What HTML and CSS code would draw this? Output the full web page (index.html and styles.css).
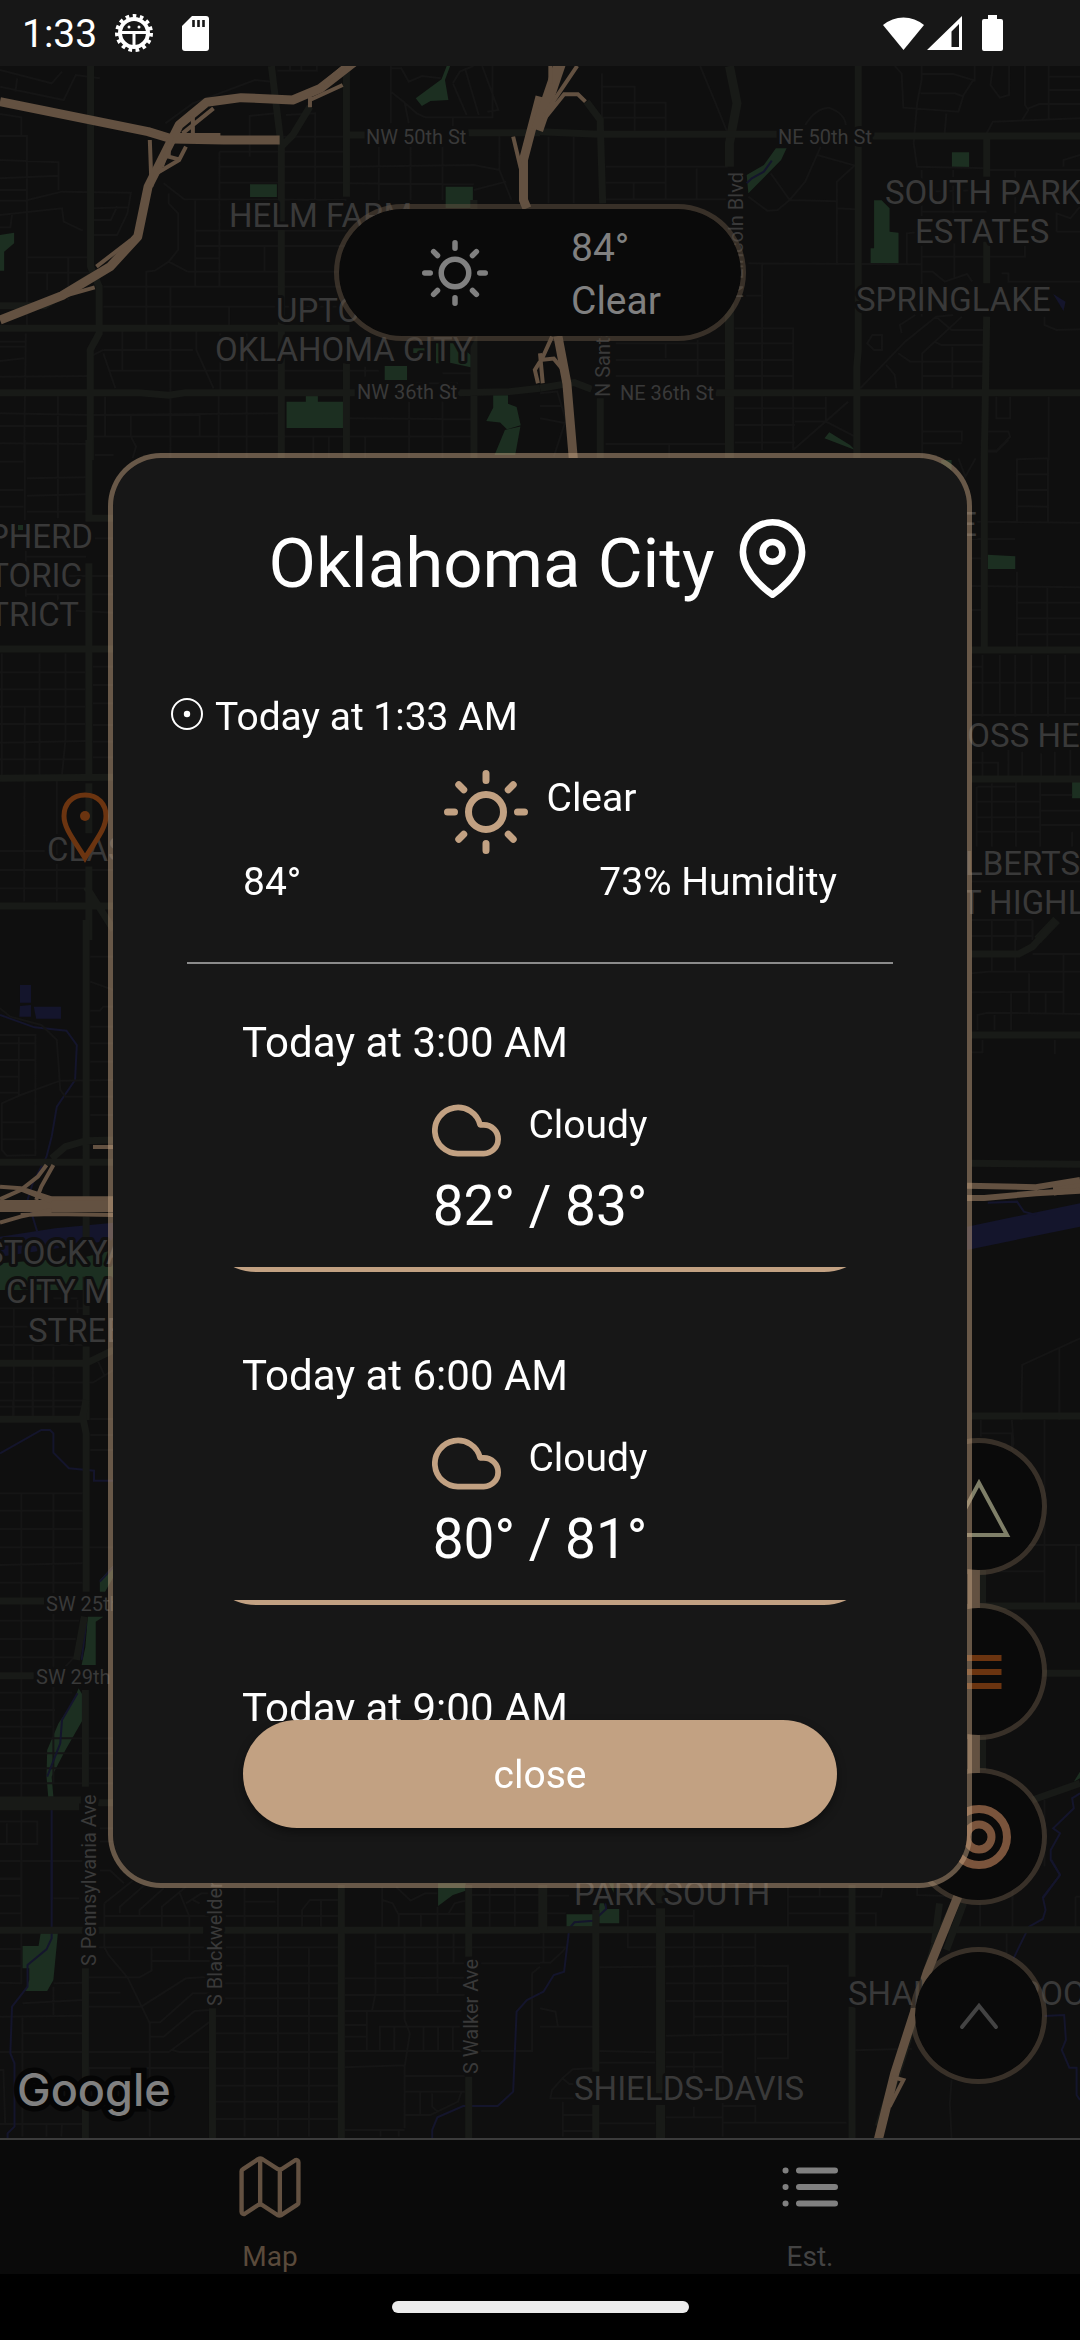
FILE: index.html
```html
<!DOCTYPE html>
<html lang="en">
<head>
<meta charset="utf-8">
<meta name="viewport" content="width=device-width, initial-scale=1">
<title>Oklahoma City weather</title>
<link rel="stylesheet" href="styles.css">
</head>
<body>
<header class="status">
  <div class="status-group">
    <span class="clock">1:33</span>
    <svg class="status-gear" viewBox="0 0 40 40" aria-hidden="true">
      <circle cx="20" cy="20" r="17" fill="none" stroke="#fff" stroke-width="4" stroke-dasharray="3.6 3.52"/>
      <circle cx="20" cy="20" r="14" fill="none" stroke="#fff" stroke-width="4"/>
      <path d="M7 19.500H33M20 20V33" stroke="#fff" stroke-width="3"/>
      <circle cx="15" cy="14" r="1.500" fill="#fff"/><circle cx="25" cy="14" r="1.500" fill="#fff"/>
    </svg>
    <svg class="status-card" viewBox="0 0 27 35" aria-hidden="true">
      <path d="M10 0H24a3 3 0 0 1 3 3V32a3 3 0 0 1-3 3H3a3 3 0 0 1-3-3V10z" fill="#fff"/>
      <path d="M11.500 4v7M16.500 4v7M21.500 4v7" stroke="#171717" stroke-width="2.600"/>
    </svg>
  </div>
  <div class="status-group status-right">
    <svg class="status-wifi" viewBox="0 0 41 34" aria-hidden="true"><path d="M0 9A32 32 0 0 1 41 9L20.500 34z" fill="#fff"/></svg>
    <svg class="status-signal" viewBox="0 0 35 34" aria-hidden="true"><path fill-rule="evenodd" d="M35 0V34H0zM32 8L24.500 15.500V31H32z" fill="#fff"/></svg>
    <svg class="status-battery" viewBox="0 0 21 36" aria-hidden="true"><path d="M6 0h9v4h4a2 2 0 0 1 2 2v28a2 2 0 0 1-2 2H2a2 2 0 0 1-2-2V6a2 2 0 0 1 2-2h4z" fill="#fff"/></svg>
  </div>
</header>

<main class="map">
  <svg class="map-art" viewBox="0 66 1080 2072" preserveAspectRatio="xMidYMid slice" aria-hidden="true">
    <!-- north-west -->
    <g transform="scale(.3444 .3333)">
      <path class="park" d="M726 553h78v38h-78zM1294 560h79v64h-79zM1297 198L1282 238 1207 295 1225 318 1250 303 1302 300 1292 240 1307 198zM832 1205h56v-20h35v20h73v79H832zM1117 1098h65v42h-65zM1432 1186h43v25l25 10 12 55-40 12-20-20-40-5 20-40zM1466 1290l45-10-15 85h-60zM0 705L41 698V730L12 755V812H0zM1307 1030h20l46 40v33l-66-15zM1200 1045h40v14h-40zM1266 1030h10v60h-10z"/>
      <path class="minor" d="M0 260L185 300 220 225 290 235M0 210L150 250 180 215M50 235L45 275M0 342L62 352V408M0 408H78V985M0 480L170 487V570M0 535L170 527M0 570L80 570M80 600L180 575 380 578 370 640 340 705H262M0 602L75 602M0 645L180 625 185 665 240 692M270 625L375 622M270 660H322L340 620M0 682H30L35 645M80 772H260M78 818H262M137 818V870M198 772V900M480 370L560 310 740 240 790 245M805 212H920V198M842 198V212M875 198V212M725 470V348L800 340M817 410H1006M830 345L915 340V600M637 455V860M637 455H1006M637 500H1006M637 548H1006M475 550L535 598 1006 600M490 580V610L517 640V750L490 785 545 815M567 600V860M567 692H1006M567 738H1006M567 775H637M768 740V812M545 815H1006M490 785L450 812 425 815V985M300 860H1006M355 985V1110M425 985V1050M495 860V1380M570 985V1050L620 1165M665 920V985M300 920H1006M300 1050H560M300 1060L335 1165M315 1112H1100M640 1000V1178M716 1000V1380M0 1040H75M0 1083L70 1075M0 1130L262 1128M0 1025H75M75 1000L70 1380M0 1240L262 1245M0 1278H262M0 1330L262 1332M168 1178V1380M262 1070L300 1050M305 1190V1310M380 1245V1310L395 1340 385 1375M262 1310H1006M262 1245L817 1240M580 1240V1310M635 1185V1380M910 1310V1380M955 1310V1380M1060 1310V1380M1188 1190V1380M1285 1190V1380M1006 1255L1376 1258M1006 1310H1376M1135 198V370M1135 205H1165L1187 245 1225 228 1280 235M1135 275L1175 308 1187 370M1175 308L1210 340 1235 352H1430V198M1315 250L1335 215 1375 198M1315 250L1355 345M1350 205L1390 345M1400 198L1447 330 1415 335M1315 355V380M1100 405V600M1192 405V600M1285 405V600M1450 405V510M1006 500L1376 495 1450 510 1485 600M1006 550L1376 553M1376 570L1470 545M1285 1120H1376M1060 1100V1130M1190 1150H1330"/>
      <path class="major" d="M263 198V800L288 860V1000L262 1050V1380M788 198L812 400 817 440V1380M1006 198V590M1006 1090V1380M0 985H1015M0 917H130L262 830M0 1178H400L490 1186 540 1178H1030M1330 1178L1480 1175 1568 1165M1015 405H1060M1360 398H1568M900 320L850 405 817 440M1376 600V1380"/>
      <path class="highway" d="M0 305L430 395 500 417 650 420H812"/>
      <path class="highway" d="M0 960L180 887 320 800 400 710 430 560 520 375 600 307 700 293 850 300 930 265 1030 185M1568 290L1520 480V600L1530 625"/>
      <path class="ramp" d="M435 420L440 560M428 400L500 410 470 500M540 440L520 480 455 520 432 560M560 350V400L545 415M490 450V470L520 478M640 405H500M900 290V322M280 800L380 720M180 890L275 862M900 300L995 255M1490 410L1512 505M1568 1085L1553 1110 1562 1150M940 250L1000 198M530 400L620 325"/>
    </g>
    <!-- north-east -->
    <g transform="translate(540) scale(.3444 .3333)">
      <path class="park" d="M1196 457h50v44h-50zM600 525L650 495 685 445H716L700 480 605 580zM970 601H992L1015 625V695L1041 698V791H960V745H970zM840 1297L900 1335 915 1350 826 1315zM1165 1380h30v30h-30z"/>
      <path class="water" d="M1490 882L1526 905 1520 933z"/>
      <path class="creek" d="M600 550L615 535 650 515 673 482"/>
      <path class="minor" d="M180 220V370M180 260H275V395M180 308H365V600M180 353H365M190 500H545M190 548H365M25 410V610M98 410V610M190 598H545M272 548V598M455 505V600M465 198L510 310 545 400M770 375Q800 325 838 323 885 340 888 375M805 465L915 497M815 440L770 545 725 600 670 520M605 590L660 632 690 630 725 600 860 604M862 790V545L915 495M862 625L915 628M605 790L1105 793M645 790V1350M595 887H645M565 985H735V1350M565 1030H735M565 1080H735M565 1128H735M220 1030H545M220 1080H545M220 1128H545M365 1030V1075M458 1020V1130M1030 198L1050 220 1055 323 1215 335 1230 285 1258 240 1200 222H1110M1108 198V240L1095 310 1085 430 1095 500 1297 505M1105 280H1205L1230 290M1262 198V245M1180 340L1175 400M1315 198L1308 255 1335 293 1362 285V198M1408 198V315L1418 330 1400 360M1477 198V358M1477 230H1568M1477 270H1568M1418 325L1450 312H1568M1297 400L1315 365 1568 355M1297 510H1568M1520 500V480L1568 465M1108 510V950M1108 575L1297 570M1108 635H1297M1200 510V640M1065 790V700L1108 695M1110 770H1408V735M1203 730V840M1110 815H1140L1175 845 1240 822 1255 845M1340 820H1360V845H1568M1500 695H1568M1380 510V640M1500 695V640L1540 655 1568 620M930 1165L1060 1025 1150 950 1200 945M1050 1000L1045 975 1090 945M1150 950L1195 990H1290M1225 950L1110 1060V1380M1145 1025L1165 1035H1290M1040 1060L1075 1085H1290M1005 1095L1030 1125 1035 1165M1197 1040V1165M1110 1128H1290M950 1030L965 1005H993V1050H970zM1465 950V975L1500 990 1568 988M565 1225H830M565 1275H740M565 1328H740M740 1265H830L915 1310M830 1190V1265M895 1205L735 1350M190 1332H545M375 1332V1380M1325 1190V1255H1365V1190M1477 1190V1380M1110 1295H1225V1325M1110 1330H1225M1300 1295H1360L1365 1310 1325 1352H1297M0 1180L50 1175 75 1260 40 1370M0 1218H60M0 1255L75 1270"/>
      <path class="major wide" d="M550 198L572 310 550 430V500M550 760V1380"/>
      <path class="major" d="M924 198V1050L920 1100V1380M1297 410V530M1297 725V850M1297 950L1290 1380M0 395L170 403H690M965 408H1568M175 370L182 610M175 1190V1380M135 305L175 360V405M510 1178H1568M0 1165L100 1148 150 1168"/>
      <path class="highway wide" d="M-8 390L58 190"/>
      <path class="ramp" d="M15 340L108 198M10 360L70 283H110L132 305M30 250V198M0 1090L35 1010M0 1080L40 1076 75 1120M0 1060L8 1150"/>
      <path class="highway" d="M52 1008L78 1150 97 1380"/>
    </g>
    <!-- west -->
    <g transform="translate(0 440) scale(.3444 .3333)">
      <path class="park" d="M52 255h15v15H52z"/>
      <path class="minor" d="M72 0V240M168 0V235M0 65H68M0 150H68M0 200H68M78 115L250 112M78 167L250 163M78 215H250M275 45H330M275 295H330M75 290V470M75 350H250M75 408H330M75 463H330M168 463V500M220 512L330 518M5 640V1005M115 640V1005M190 640V900L180 1005M0 697H248M0 748H248M0 800H248M0 852H248M0 908L250 903M0 958H250M72 800L70 1385M270 680H330M270 735H330M270 790H330M270 855H330M270 905H330M270 952H330M165 1020V1385M0 1233H130M0 1290H330M0 1345H250M270 1290H330"/>
      <path class="major" d="M258 0V235H330M0 627H330M258 370V1020M0 1015L330 1012M258 1030V1180M258 1280V1500M0 1398H330M250 1340L330 1470"/>
    </g>
    <g transform="translate(0 920) scale(.3444 .3333)">
      <path class="park" d="M0 1030L250 1010 330 990V1110H0z"/>
      <path class="water" d="M58 195H90V248H58zM58 258L90 255V290H56zM98 260H177V296H105zM0 950L160 925 330 908V960L0 1010z"/>
      <path class="creek" d="M0 285L100 322 193 332 223 375 218 480 165 560 150 650 135 710 95 790 80 840 108 935"/>
      <path class="minor" d="M0 265L30 290 120 315 165 360 175 510 190 530 330 530M0 345H103V705L20 707 5 690V550L60 525 175 482 330 480M55 350V525M0 370H103M0 420H103M0 470H55M0 518H55M5 607H103M5 658H103M262 110H330M262 185L330 210M262 272H290L300 260H330M262 320H330M262 370H330M262 425H330M262 585H330M40 1165V1500M95 1280V1500M155 1280V1500M0 1165H250M0 1220H85M155 1135H225M0 1275H240M0 1388H270L330 1350M285 1325L305 1370M0 1442H245M225 1140V1180"/>
      <path class="major" d="M250 0V640M250 640V840M250 890V960M250 1070V1185M250 1280V1500M0 727H330M150 715L190 680 250 662 330 660M0 1330H250L330 1290"/>
      <path class="highway wide" d="M0 858H330"/>
      <path class="ramp" d="M0 800L60 805 150 835H330M0 908L60 890 150 870M0 838L60 810 110 770 135 735M105 840L120 800 155 735M60 885L150 882 330 885M60 808L150 845M270 681H330"/>
    </g>
    <g transform="translate(0 1400) scale(.3444 .3333)">
      <path class="park" d="M330 495L290 540V575H305L330 530zM255 650H300L278 665V795H237L248 740zM228 865L240 885V960L190 1050 150 1130 155 1190H140L135 1130 137 1050 170 970 215 900z"/>
      <path class="minor" d="M38 0V48M95 0V48M155 0V48M0 20H240M262 57H330M262 105H330M262 150H330M0 280H240M62 280V1500M155 280V1150M0 332H240M0 387H240M0 442H330M0 495L240 490M0 548H240M0 662H230M0 717H220M0 772H215L190 800M0 878H210M0 930H160M0 980H150M0 1015H330M0 1060H330M0 1105H330M0 1150H330M0 1265H108V1332H0M20 1270V1330M0 1383H240M0 1435H60M290 1285H330M290 1325H330M290 1412H320L360 1450"/>
      <path class="creek" d="M0 160L120 90H145L155 100V158L200 205 273 212V242H330M330 500L290 545M250 670L237 780M225 880L180 960 175 1030 137 1130M150 1190V1500"/>
      <path class="major" d="M250 0L240 50 250 100V575M0 58H240M0 603H128M0 827H98M245 650L222 780M248 870V1160M0 1200H235M0 1220H230M285 1208H330"/>
    </g>
    <!-- south-west -->
    <g transform="translate(0 1860) scale(.3444 .3333)">
      <path class="park" d="M65 258H112L118 220H168L155 360 137 393H73L85 360V325H65zM1272 70H1352V92L1315 105 1272 138z"/>
      <path class="minor" d="M0 57H62M0 107H62M0 160H62M62 0V370L0 368M155 115H230M0 267H65M0 318H65M155 370L240 368M0 470L240 467M65 430L240 420M155 380V465M65 470V830M65 520H240M0 576H490L610 485M258 624H610M258 700V624M0 792H240M135 792V830M180 792L178 830M0 630H10L15 792M258 262H610M258 352H405L440 332V262M258 398H350M258 440H410L540 355 610 350M370 352L435 490V830M430 487H465L560 400 610 400M435 530H475L565 453 610 450M303 130V262L315 285 370 352M303 130L385 62M348 160V140L420 75M405 165V150L475 85M470 215V140L540 80M300 168H610M520 95L550 170V305M440 303H610M540 130L585 100H610M560 120L580 130M500 570L520 576H990M710 80V830M807 80V830M897 262V830M712 125H800M655 168H990M877 200V150L900 120H985M932 120V200M655 262H990M655 317H990M625 370H990M625 415H990M625 468H990M625 520H990M625 625H990M625 677H990M625 725H990M625 777H990M1110 80V210M1110 120L1140 130 1158 165V205M1150 80L1192 122 1235 100H1270M1158 162H1350M1300 165L1320 130 1350 122M1222 165V205M1270 140V400M1090 220V400L1080 455M1175 220V480L1190 520 1175 620V805M1090 262H1350M1090 310H1350M1000 355L1350 353M1000 405H1350M1000 453H1340M1065 453V570M1000 495H1065M1000 530H1065M1000 573H1545V340L1568 320M1103 570V500H1340M1145 500V570M1230 500V570M1272 500V570M1315 500V570M1000 622L1175 616M1175 648H1350M1175 695H1350M1220 695V765M1175 765H1250L1330 725 1340 695M1255 700V740L1270 755M1000 810H1175M1105 810V830M1158 810V830M1317 220V310M1370 105H1568M1422 80V205M1495 80V200M1370 158H1568M1370 262H1568M1370 310H1568"/>
      <path class="creek" d="M150 0V235L135 268 80 315V380L35 440 30 580 42 610V800L22 820V835M1568 400L1530 420 1500 455 1490 695 1445 738H1345L1270 772 1255 810V835"/>
      <path class="major" d="M0 211H590M650 211H1568M248 325V835M617 445V835M991 75V835M1361 75V290M1361 650V835"/>
    </g>
    <!-- south-east -->
    <g transform="translate(540 1860) scale(.3444 .3333)">
      <path class="park" d="M77 163H155V200H77zM172 130H185L192 147H230V190H172zM200 70H215V100z"/>
      <path class="minor" d="M10 80V310M10 107H85M10 160H75M0 262H75L65 275 30 308H0M255 150V262H625M255 168H445M447 150V525M172 322L720 317V595H630M365 370H720M365 423H720M447 470H720M172 500H0M0 445L45 455 52 500M365 527L720 522M530 220V830M625 220V640M172 573L335 577M365 577H530M172 608H335M447 580V640M365 620H530M155 625L95 628 65 655 35 690 30 715H100M65 655L85 672H100M66 725V830M66 765H155M66 813H155M172 790H335M365 772H530M447 740V770M530 738H625V785M530 788H890M720 80V210M720 110H990L995 80M720 160H975V200M812 80V110M1095 80V105L1180 108M1278 130V200M1372 100V200M1355 220V280M1555 110V200M915 571L1080 566M1195 660L1190 730 1195 835M1555 110H1568"/>
      <path class="creek" d="M190 130L192 147 155 182 100 187 85 205 70 335 40 345 10 395 0 400M1485 0L1510 45 1460 112 1468 150 1460 177 1420 200 1375 295M1465 468L1522 465 1527 540 1515 570 1537 623H1558V705L1568 720"/>
      <path class="major" d="M162 150V635M162 735V835M0 209H1568M906 75V350M906 440V835"/>
      <path class="major wide" d="M350 70V130M350 145V640M350 640V700M350 735V835M8 75V210M1215 110L1150 250 1060 560 985 800"/>
      <path class="major" d="M1160 130L1145 250M1230 130L1180 270"/>
      <path class="highway" d="M1213 110L1125 335 1030 640 982 840"/>
      <path class="ramp" d="M1020 650L1055 660 1015 740"/>
    </g>
    <!-- east -->
    <g transform="translate(540 440) scale(.3444 .3333)">
      <path class="park" d="M1300 344L1380 349V387H1300zM1545 1025H1568V1075H1545z"/>
      <path class="minor" d="M1385 55V245M1385 58L1475 55V245M1385 103H1475M1385 150H1475M1385 198L1475 200M1300 35H1325L1360 0M1215 55L1235 110 1265 55M1253 245L1568 248M1253 297H1380M1253 355H1300M1253 438L1568 442M1385 395V625M1385 488H1568M1473 442V625M1253 510H1285M1385 535H1568M1385 583H1568M1285 645V830M1335 645V820M1380 645V830M1427 645V820M1475 645V830M1525 645V820M1253 680H1285M1253 728H1568M1253 825H1568M1523 775H1568M1253 968H1330V1010M1285 935V1010M1360 930V1010M1400 935V1010M1455 940V1010M1495 935V1010M1540 930V1010M1268 1040V1220M1312 1030V1220M1382 1025V1220M1452 1025V1220M1270 1040H1380M1270 1085H1450M1270 1132H1450M1270 1175H1450M1455 1065H1545M1455 1112H1568M1455 1155H1568M1253 1325H1568M1253 1440H1430M1312 1440V1500M1382 1440V1500M1430 1440V1500M1253 1488H1425M1545 1175V1220"/>
      <path class="major" d="M1290 0V625M1253 630H1568M1253 1017H1568"/>
      <path class="major wide" d="M1500 1440L1445 1500"/>
    </g>
    <g transform="translate(540 920) scale(.3444 .3333)">
      <path class="water" d="M1240 920L1568 850V920L1240 990z"/>
      <path class="creek" d="M1300 848L1385 845 1405 875 1440 885"/>
      <path class="minor" d="M1253 48H1430V0M1312 0V155M1380 0V155M1253 160L1300 155H1568M1430 102H1568M1520 102V280M1420 160V280M1253 217L1520 215M1368 220V330M1468 220V280M1270 330V285L1300 278 1568 282M1320 285V330M1285 360V397H1253M1495 360V402M1568 1255L1400 1335 1398 1500M1508 1285V1500"/>
      <path class="major" d="M1253 102H1390L1430 80 1500 0M1253 345H1568M1253 730L1568 733"/>
      <path class="highway wide" d="M1490 809L1580 796"/>
      <path class="ramp heavy" d="M1240 797L1440 802 1568 780M1240 834H1290L1440 820 1568 812"/>
    </g>
    <g transform="translate(540 1400) scale(.3444 .3333)">
      <path class="park" d="M1568 1115L1550 1145 1568 1135z"/>
      <path class="minor" d="M1398 0V40M1508 0V40M1280 60V110M1280 100H1370V150L1375 130 1370 60M1465 60V610M1330 435H1568M1330 514H1465M1557 435V610M1465 1200V1400M1372 1420V1500"/>
      <path class="creek" d="M1568 1180L1545 1195 1550 1225 1490 1285 1510 1300 1483 1350V1380L1510 1425 1460 1495"/>
      <path class="major" d="M1253 48H1568M1253 618H1568M1460 820H1568M1430 1200L1568 1150M1285 510V610M1285 1010V1110"/>
      <path class="highway wide" d="M1260 500V1120"/>
    </g>

    <g class="place">
      <text x="229" y="227">HELM FARM</text>
      <text x="276" y="322">UPTOWN</text>
      <text x="215" y="361">OKLAHOMA CITY</text>
      <text x="885" y="204">SOUTH PARK</text>
      <text x="915" y="243">ESTATES</text>
      <text x="856" y="311">SPRINGLAKE</text>
      <text x="93" y="548" text-anchor="end">SHEPHERD</text>
      <text x="82" y="587" text-anchor="end">HISTORIC</text>
      <text x="79" y="626" text-anchor="end">DISTRICT</text>
      <text x="47" y="861">CLASSEN</text>
      <text x="-16" y="1264">STOCKYARDS</text>
      <text x="6" y="1303">CITY MAIN</text>
      <text x="28" y="1342">STREET</text>
      <text x="977" y="536" text-anchor="end">CREE</text>
      <text x="947" y="747">ROSS HEIGHTS</text>
      <text x="922" y="875">CULBERTSON</text>
      <text x="902" y="914">EAST HIGHLAND</text>
      <text x="574" y="1905">PARK SOUTH</text>
      <text x="574" y="2100">SHIELDS-DAVIS</text>
      <text x="848" y="2005">SHALLOWBROOK</text>
    </g>
    <g class="street">
      <text x="366" y="144">NW 50th St</text>
      <text x="357" y="399">NW 36th St</text>
      <text x="778" y="144">NE 50th St</text>
      <text x="620" y="400">NE 36th St</text>
      <text x="46" y="1611">SW 25th St</text>
      <text x="36" y="1684">SW 29th St</text>
      <text transform="translate(743 172) rotate(-90)" text-anchor="end">N Lincoln Blvd</text>
      <text transform="translate(610 397) rotate(-90)">N Santa Fe Ave</text>
      <text transform="translate(96 1966) rotate(-90)">S Pennsylvania Ave</text>
      <text transform="translate(222 2006) rotate(-90)">S Blackwelder Ave</text>
      <text transform="translate(478 2074) rotate(-90)">S Walker Ave</text>
    </g>
    <g transform="translate(85 795)">
      <path class="marker" d="M0 0C-13 0-21 9-21 21-21 34-10 46 0 63 10 46 21 34 21 21 21 9 13 0 0 0z"/>
      <circle cy="21" r="5" fill="#6b3410"/>
    </g>
  </svg>

  <button class="weather-pill" type="button">
    <svg class="pill-sun" viewBox="0 0 24 24" aria-hidden="true"><circle cx="12" cy="12" r="5"/><path d="M12 1v2M12 21v2M4.220 4.220l1.420 1.420M18.360 18.360l1.420 1.420M1 12h2M21 12h2M4.220 19.780l1.420-1.420M18.360 5.640l1.420-1.420"/></svg>
    <span class="pill-text"><span>84°</span><span>Clear</span></span>
  </button>

  <div class="tools">
    <button class="tool" type="button" aria-label="Alerts"><svg viewBox="0 0 80 80"><path d="M40 16L68 68H12z" fill="none" stroke="#7f7f68" stroke-width="4"/></svg></button>
    <button class="tool" type="button" aria-label="Layers"><svg viewBox="0 0 80 80"><path d="M17.500 26H62.500M17.500 40H62.500M17.500 54H62.500" stroke="#6b3410" stroke-width="6"/></svg></button>
    <button class="tool" type="button" aria-label="Locate me"><svg viewBox="0 0 80 80" fill="none" stroke="#7a543c" stroke-width="8"><circle cx="40" cy="40" r="28"/><circle cx="40" cy="40" r="12.500"/></svg></button>
    <button class="tool tool-expand" type="button" aria-label="Expand"><svg viewBox="0 0 80 80"><path d="M23 51L40 30 57 51" fill="none" stroke="#434343" stroke-width="4" stroke-linecap="round"/></svg></button>
  </div>
  <span class="brand">Google</span>
</main>

<nav class="tabs">
  <a class="tab tab-active" href="#map">
    <svg viewBox="0 0 512 512" aria-hidden="true"><path d="M313.270 124.640L198.730 51.360a32 32 0 00-29.280.350L56.510 127.490A16 16 0 0048 141.630v295.800a16 16 0 0023.490 14.140l97.820-63.790a32 32 0 0129.500-.240l111.860 73a32 32 0 0029.270-.110l115.430-75.940a16 16 0 008.630-14.200V74.570a16 16 0 00-23.490-14.140l-98 63.860a32 32 0 01-29.240.350zM328 128v336M184 48v336"/></svg>
    <span>Map</span>
  </a>
  <a class="tab" href="#est">
    <svg viewBox="0 0 70 70" aria-hidden="true"><path stroke-width="6" d="M24 18.500H60M24 35H60M24 51.500H60M10.500 18.500h.1M10.500 35h.1M10.500 51.500h.1"/></svg>
    <span>Est.</span>
  </a>
</nav>
<footer class="gesture"><span class="gesture-bar"></span></footer>

<div class="overlay">
  <section class="dialog" role="dialog" aria-labelledby="city">
    <header class="dialog-head">
      <h1 id="city">Oklahoma City</h1>
      <svg viewBox="0 0 24 24" aria-hidden="true"><path d="M21 10c0 7-9 13-9 13s-9-6-9-13a9 9 0 0 1 18 0z"/><circle cx="12" cy="10" r="3"/></svg>
    </header>
    <div class="now">
      <h2 class="now-time">
        <svg viewBox="0 0 32 32" aria-hidden="true"><circle cx="16" cy="16" r="15" fill="none" stroke="#fff" stroke-width="2"/><circle cx="16" cy="16" r="3.200" fill="#fff"/></svg>
        Today at 1:33 AM
      </h2>
      <div class="now-sky">
        <svg class="icon-tan" viewBox="0 0 24 24" aria-hidden="true"><circle cx="12" cy="12" r="5"/><path d="M12 1v2M12 21v2M4.220 4.220l1.420 1.420M18.360 18.360l1.420 1.420M1 12h2M21 12h2M4.220 19.780l1.420-1.420M18.360 5.640l1.420-1.420"/></svg>
        <span>Clear</span>
      </div>
      <div class="now-readings"><span>84°</span><span>73% Humidity</span></div>
    </div>
    <hr class="divider">
    <div class="forecasts">
      <article class="forecast">
        <h2>Today at 3:00 AM</h2>
        <div class="sky">
          <svg class="icon-tan" viewBox="0 0 24 24" aria-hidden="true"><path d="M18 10h-1.260A8 8 0 1 0 9 20h9a5 5 0 0 0 0-10z"/></svg>
          <span>Cloudy</span>
        </div>
        <p class="temps">82° / 83°</p>
        <div class="rule"></div>
      </article>
      <article class="forecast">
        <h2>Today at 6:00 AM</h2>
        <div class="sky">
          <svg class="icon-tan" viewBox="0 0 24 24" aria-hidden="true"><path d="M18 10h-1.260A8 8 0 1 0 9 20h9a5 5 0 0 0 0-10z"/></svg>
          <span>Cloudy</span>
        </div>
        <p class="temps">80° / 81°</p>
        <div class="rule"></div>
      </article>
      <article class="forecast">
        <h2>Today at 9:00 AM</h2>
      </article>
    </div>
    <button class="close" type="button">close</button>
  </section>
</div>
</body>
</html>
```
FILE: styles.css
```css
* { box-sizing: border-box; margin: 0; padding: 0; }

body {
  display: flex;
  flex-direction: column;
  min-height: 100vh;
  background: #000;
  color: #fff;
  font-family: Roboto, "Liberation Sans", sans-serif;
  font-size: 39px;
  line-height: 46px;
}

svg { display: block; flex: none; }
button { font: inherit; color: inherit; border: 0; }
h1, h2 { font-weight: 400; }
a { color: inherit; text-decoration: none; }

/* status bar */
.status {
  display: flex;
  justify-content: space-between;
  align-items: center;
  height: 66px;
  padding: 0 77px 0 22px;
  background: #171717;
}
.status-group { display: flex; align-items: center; }
.clock { padding-top: 2px; }
.status-gear { width: 40px; height: 40px; margin: 0 28px 0 17px; }
.status-card { width: 27px; height: 35px; }
.status-wifi { width: 41px; height: 34px; }
.status-signal { width: 35px; height: 34px; margin: 0 20px 0 3px; }
.status-battery { width: 21px; height: 36px; }

/* map */
.map {
  position: relative;
  flex: 1;
  overflow: hidden;
  background: #0f0f0f;
}
.map-art { position: absolute; inset: 0; width: 100%; height: 100%; }
.map-art path { fill: none; vector-effect: non-scaling-stroke; }
.map-art .park { fill: #1c2f21; }
.map-art .water { fill: #14152c; }
.map-art .creek { stroke: #14152c; stroke-width: 2; }
.map-art .minor { stroke: #151515; stroke-width: 2; }
.map-art .major { stroke: #181a17; stroke-width: 7; }
.map-art .highway { stroke: #635141; stroke-width: 9; stroke-linejoin: round; }
.map-art .ramp { stroke: #635141; stroke-width: 4; }
.map-art .major.wide { stroke-width: 9; }
.map-art .highway.wide { stroke-width: 12; }
.map-art .ramp.heavy { stroke-width: 6; }
.map-art .marker { stroke: #6b3410; stroke-width: 5; }
.place, .street {
  fill: #393939;
  stroke: #0f0f0f;
  stroke-width: 6;
  stroke-linejoin: round;
  paint-order: stroke;
}
.place { font-size: 33px; }
.street { font-size: 20px; }

.weather-pill {
  position: absolute;
  top: 138px;
  left: 50%;
  transform: translateX(-50%);
  display: flex;
  align-items: center;
  gap: 83px;
  width: 412px;
  height: 137px;
  padding-left: 83px;
  border: 5px solid rgba(97, 81, 65, .5);
  border-radius: 69px;
  background: #0a0a0a;
  background-clip: padding-box;
  color: #808080;
  text-align: left;
}
.pill-sun {
  width: 66px;
  height: 66px;
  fill: none;
  stroke: #808080;
  stroke-width: 2;
  stroke-linecap: round;
}
.pill-text { display: grid; padding-top: 5px; line-height: 53px; }

.tools {
  position: absolute;
  right: 33px;
  bottom: 54px;
  display: flex;
  flex-direction: column;
  gap: 28px;
}
.tool {
  display: grid;
  place-items: center;
  width: 137px;
  height: 137px;
  border: 5px solid rgba(97, 81, 65, .5);
  border-radius: 50%;
  background: #0a0a0a;
  background-clip: padding-box;
}
.tool svg { width: 80px; height: 80px; }
.tool-expand { margin-top: 14px; }

.brand {
  position: absolute;
  left: 17px;
  bottom: 21px;
  color: #808080;
  font: 500 45px/54px Inter, sans-serif;
  -webkit-text-stroke: 11px #050505;
  paint-order: stroke fill;
}

/* tab bar */
.tabs {
  display: flex;
  height: 136px;
  border-top: 2px solid #3b3b3b;
  background: #0a0a0a;
  color: #434343;
  font-size: 28px;
  line-height: 32px;
}
.tab {
  flex: 1;
  display: flex;
  flex-direction: column;
  align-items: center;
  gap: 19px;
  padding-top: 12px;
}
.tab svg {
  width: 70px;
  height: 70px;
  fill: none;
  stroke: #808080;
  stroke-linecap: round;
}
.tab-active { color: #5a4a3b; }
.tab-active svg { stroke: #635141; stroke-width: 32; stroke-linejoin: round; }

.gesture { display: grid; place-items: center; height: 66px; }
.gesture-bar { width: 297px; height: 12px; border-radius: 6px; background: #ececec; }

/* forecast dialog */
.overlay {
  position: fixed;
  inset: 0;
  display: flex;
  align-items: center;
  justify-content: center;
}
.dialog {
  display: flex;
  flex-direction: column;
  width: 80%;
  padding: 61px 0 55px;
  border: 5px solid rgba(194, 161, 130, .5);
  border-radius: 53px;
  background: #171717;
  background-clip: padding-box;
}
.dialog-head { display: flex; justify-content: center; gap: 18px; }
.dialog-head h1 { padding-top: 5px; font-size: 69px; line-height: 80px; }
.dialog-head svg {
  width: 79px;
  height: 79px;
  fill: none;
  stroke: #fff;
  stroke-width: 2;
}
.now { padding: 90px 130px 57px; }
.now-time {
  display: flex;
  gap: 12px;
  margin: 0 -72px;
  font-size: 39px;
  line-height: 46px;
}
.now-time svg { width: 32px; height: 32px; margin-top: 4px; }
.now-sky { display: flex; justify-content: center; gap: 19px; margin-top: 30px; }
.now-sky span { padding-top: 5px; }
.now-sky svg { width: 84px; height: 84px; }
.now-readings { display: flex; justify-content: space-between; margin-top: 5px; }
.icon-tan {
  fill: none;
  stroke: #c2a182;
  stroke-width: 2;
  stroke-linecap: round;
  stroke-linejoin: round;
}
.divider { margin: 0 74px; border: 0; border-top: 2px solid #8b8b8b; }
.forecasts {
  max-height: 757px;
  padding-top: 54px;
  overflow-y: auto;
  scrollbar-width: none;
}
.forecast h2 { padding: 0 129px; font-size: 42px; line-height: 50px; }
.sky { display: flex; justify-content: center; gap: 27px; margin-top: 28px; }
.sky svg { width: 69px; height: 69px; }
.sky span { padding-top: 6px; }
.temps { margin-top: 9px; font-size: 55px; line-height: 64px; text-align: center; }
.rule { height: 5px; margin: 29px 90px 79px; overflow: hidden; }
.rule::after {
  content: "";
  display: block;
  height: 106px;
  margin-top: -101px;
  border-radius: 53px;
  background: #c2a182;
}
.close {
  position: relative;
  height: 108px;
  margin: -1px 130px 0;
  padding-top: 3px;
  border-radius: 54px;
  background: #c2a182;
  box-shadow: 0 4px 10px rgba(0, 0, 0, .4);
}
```
